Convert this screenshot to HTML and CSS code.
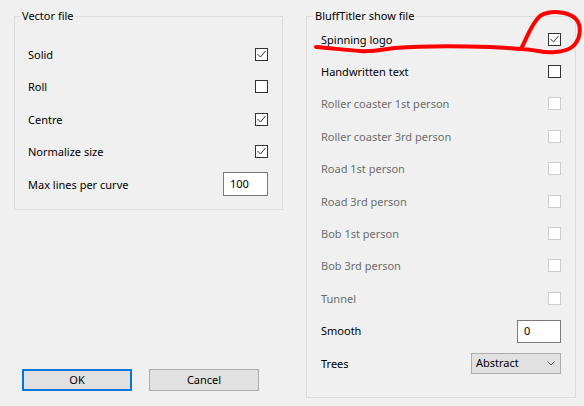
FILE: index.html
```html
<!DOCTYPE html>
<html lang="en">
<head>
    <meta charset="UTF-8">
    <meta name="viewport" content="width=device-width, initial-scale=1">
    <title>Import settings</title>
    <link rel="stylesheet" href="styles.css">
</head>
<body>
    <div class="dialog">
        <div class="column-left">
            <fieldset class="group group-vector">
                <legend>Vector file</legend>
                <div class="row"><span>Solid</span><span class="check"><svg viewBox="0 0 11 11"><polyline points="1.5,5 4.5,8 9.5,2"/></svg></span></div>
                <div class="row"><span>Roll</span><span class="check"></span></div>
                <div class="row"><span>Centre</span><span class="check"><svg viewBox="0 0 11 11"><polyline points="1.5,5 4.5,8 9.5,2"/></svg></span></div>
                <div class="row"><span>Normalize size</span><span class="check"><svg viewBox="0 0 11 11"><polyline points="1.5,5 4.5,8 9.5,2"/></svg></span></div>
                <div class="row"><span>Max lines per curve</span><input class="field field-lines" type="text" value="100"></div>
            </fieldset>
            <div class="buttons">
                <button class="btn btn-default">OK</button>
                <button class="btn">Cancel</button>
            </div>
        </div>

        <fieldset class="group group-show">
            <legend>BluffTitler show file</legend>
            <div class="row"><span>Spinning logo</span><span class="check"><svg viewBox="0 0 11 11"><polyline points="1.5,5 4.5,8 9.5,2"/></svg></span></div>
            <div class="row"><span>Handwritten text</span><span class="check"></span></div>
            <div class="row disabled"><span>Roller coaster 1st person</span><span class="check"></span></div>
            <div class="row disabled"><span>Roller coaster 3rd person</span><span class="check"></span></div>
            <div class="row disabled"><span>Road 1st person</span><span class="check"></span></div>
            <div class="row disabled"><span>Road 3rd person</span><span class="check"></span></div>
            <div class="row disabled"><span>Bob 1st person</span><span class="check"></span></div>
            <div class="row disabled"><span>Bob 3rd person</span><span class="check"></span></div>
            <div class="row disabled"><span>Tunnel</span><span class="check"></span></div>
            <div class="row"><span>Smooth</span><input class="field field-smooth" type="text" value="0"></div>
            <div class="row">
                <span>Trees</span>
                <div class="dropdown">
                    <span>Abstract</span>
                    <svg width="8" height="5" viewBox="0 0 8 5"><polyline points="0.5,0.5 4,4 7.5,0.5"/></svg>
                </div>
            </div>
        </fieldset>

        <!-- red marker scribble drawn over the dialog -->
        <svg class="scribble" width="584" height="406" viewBox="0 0 584 406">
            <path d="M316 47 C 330 48, 345 50, 360 51 C 372 52, 380 50, 395 48 C 420 46, 460 46, 490 47 C 505 47.5, 515 49, 521 49 C 527 38, 531 24, 540 16 C 550 10, 568 11, 576 19 C 582 26, 581 40, 572 47 C 564 53, 548 53, 538 51 C 532 50, 526 49, 521 49"/>
        </svg>
    </div>
</body>
</html>
```

FILE: styles.css
```css
html, body {
    margin: 0;
    background-color: #f0f0f0;
    font-family: 'Noto Sans', sans-serif;
    font-size: 11px;
    color: #000;
}

.dialog {
    position: relative;
    display: flex;
    gap: 23px;
    height: 406px;
    box-sizing: border-box;
    padding: 9px 0 0 14px;
}

.column-left {
    width: 269px;
    display: flex;
    flex-direction: column;
}

.group {
    margin: 0;
    min-width: 0;
    border: 1px solid #dcdcdc;
    box-sizing: border-box;
}

.group legend {
    margin-left: -8px;
    padding: 0 2px;
    line-height: 14px;
}

.group-vector {
    padding: 15px 14px 8px 13px;
}

.group-vector .row {
    height: 32.5px;
}

.group-show {
    width: 270px;
    align-self: flex-start;
    padding: 0 14px 18px 14px;
}

.group-show .row {
    height: 32.4px;
}

.row {
    display: flex;
    align-items: center;
    justify-content: space-between;
}

.row.disabled {
    color: #6d6d6d;
}

.check {
    width: 13px;
    height: 13px;
    box-sizing: border-box;
    border: 1px solid #333;
    background-color: #fff;
    display: flex;
}

.check svg {
    width: 11px;
    height: 11px;
    fill: none;
    stroke: #333;
    stroke-width: 1;
}

.row.disabled .check {
    border-color: #cccccc;
}

.field {
    box-sizing: border-box;
    border: 1px solid #7a7a7a;
    background-color: #fff;
    font-family: 'Noto Sans', sans-serif;
    font-size: 11px;
    padding: 0 0 2px 6px;
    outline: none;
}

.field-lines {
    width: 45px;
    height: 24px;
}

.field-smooth {
    width: 44px;
    height: 23px;
    margin-top: 2px;
}

.dropdown {
    width: 90px;
    height: 21px;
    box-sizing: border-box;
    border: 1px solid #adadad;
    background-color: #e1e1e1;
    display: flex;
    align-items: center;
    justify-content: space-between;
    padding: 0 5px 2px 4px;
}

.dropdown svg {
    fill: none;
    stroke: #606060;
    stroke-width: 1;
    margin-top: 2px;
}

.buttons {
    display: flex;
    gap: 17px;
    margin: auto 0 15px 8px;
}

.btn {
    width: 110px;
    height: 22px;
    box-sizing: border-box;
    border: 1px solid #adadad;
    background-color: #e1e1e1;
    font-family: 'Noto Sans', sans-serif;
    font-size: 11px;
    color: #000;
    padding: 0 0 1px;
}

.btn-default {
    border: 2px solid #0078d7;
}

.scribble {
    position: absolute;
    top: 0;
    left: 0;
    pointer-events: none;
}

.scribble path {
    fill: none;
    stroke: #ff0000;
    stroke-width: 4;
    stroke-linecap: round;
    stroke-linejoin: round;
}
```
